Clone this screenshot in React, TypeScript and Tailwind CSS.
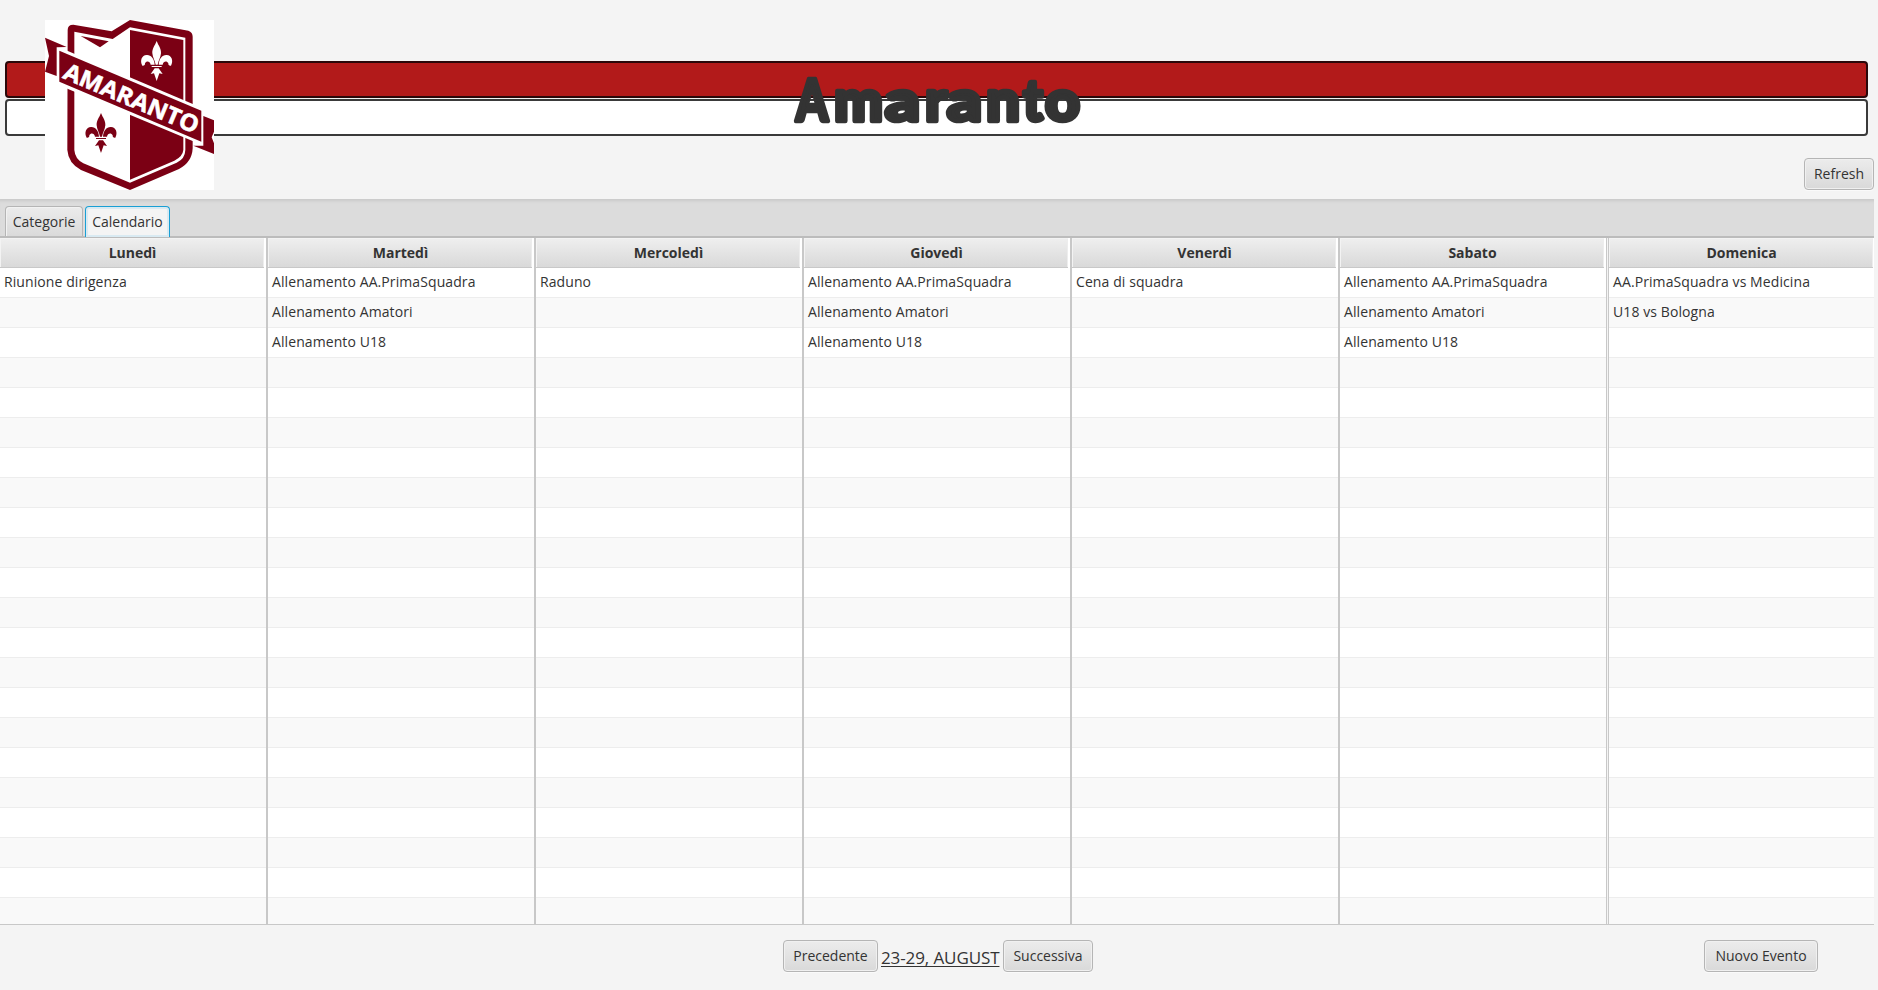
import React from "react";

type Day = { name: string; events: string[] };

const days: Day[] = [
  { name: "Lunedì", events: ["Riunione dirigenza"] },
  { name: "Martedì", events: ["Allenamento AA.PrimaSquadra", "Allenamento Amatori", "Allenamento U18"] },
  { name: "Mercoledì", events: ["Raduno"] },
  { name: "Giovedì", events: ["Allenamento AA.PrimaSquadra", "Allenamento Amatori", "Allenamento U18"] },
  { name: "Venerdì", events: ["Cena di squadra"] },
  { name: "Sabato", events: ["Allenamento AA.PrimaSquadra", "Allenamento Amatori", "Allenamento U18"] },
  { name: "Domenica", events: ["AA.PrimaSquadra vs Medicina", "U18 vs Bologna"] },
];

const ROWS = 22;

// Start and width of each letter in the club title.
const title: [string, number, number][] = [
  ["A", 1, 32],
  ["m", 39, 49],
  ["a", 90, 35],
  ["r", 130, 22],
  ["a", 152, 35],
  ["n", 191, 34],
  ["t", 228, 20],
  ["o", 250, 35],
];

function Lily() {
  return (
    <>
      <path d="M380 93C386 108 394 116 393 130C392 143 385 152 383 164H377C375 152 368 143 367 130C366 116 374 108 380 93Z" />
      <path d="M374 164C373 146 363 134 350 135C335 136 329 152 337 167C342 168 346 165 345 160C350 151 360 154 362 164Z" />
      <path d="M386 164C387 146 397 134 410 135C425 136 431 152 423 167C418 168 414 165 415 160C410 151 400 154 398 164Z" />
      <path d="M365 168H395V171H365Z" />
      <path d="M374 175H386L398 192L388 190L380 213L372 190L362 192Z" />
    </>
  );
}

function Crest() {
  return (
    <svg viewBox="45 30 507 510" preserveAspectRatio="none" className="block h-[170px] w-[169px] bg-white">
      <path
        fill="#7b0014"
        d="M113 60Q113 44 130 44L245 64L300 30L475 62Q488 66 488 80V415Q486 457 447 477L300 540L153 480Q115 460 112 420Z"
      />
      <path fill="#fff" d="M133 65L248 87L300 52L466 83V420Q465 447 440 458L300 518L160 460Q135 447 133 420Z" />
      <path fill="#7b0014" d="M300 60L460 90V420Q458 440 433 452L300 509Z" />
      <path fill="#7b0014" d="M152 78L236 94L210 112Z" />
      <g fill="#fff">
        <Lily />
      </g>
      <g fill="#7b0014" transform="translate(-167 216)">
        <Lily />
      </g>
      <path fill="#fff" d="M80 109L522 296V407L80 223Z" />
      <path fill="#7b0014" d="M88 122L514 302V395L88 215Z" />
      <path fill="#7b0014" d="M45 83L110 111L80 112V198L45 185L57 138Z" />
      <path fill="#7b0014" d="M520 318L552 331V365L545 382L552 400V432L490 407H520Z" />
      <text
        x="0"
        y="0"
        transform="translate(95 203) rotate(22.9)"
        textLength="434"
        lengthAdjust="spacingAndGlyphs"
        fill="#fff"
        stroke="#fff"
        strokeWidth="1.5"
        className="font-['Open_Sans',sans-serif] text-[70px] font-bold"
      >
        AMARANTO
      </text>
    </svg>
  );
}

function Button({ children, className }: { children: React.ReactNode; className: string }) {
  return (
    <button
      className={
        "flex h-8 shrink-0 items-center justify-center whitespace-nowrap rounded-[4px] border border-[#b5b5b5] bg-linear-to-b from-[#ececec] to-[#d9d9d9] pb-px text-[14px] shadow-[0_1px_0_#fafafa,inset_0_0_0_1px_#f0f0f0] " +
        className
      }
    >
      {children}
    </button>
  );
}

function DayColumn({ day, index }: { day: Day; index: number }) {
  const last = index === 6;
  const beforeLast = index === 5;
  return (
    <div
      className={
        "flex h-[687px] shrink-0 flex-col overflow-hidden bg-white " +
        (last
          ? "w-[266px] border-l border-[#c8c8c8]"
          : beforeLast
            ? "mr-px w-[267px] border-r border-[#c8c8c8]"
            : "w-[268px] border-r-2 border-[#c8c8c8]")
      }
    >
      <div className={"flex h-[30px] shrink-0 " + (last ? "pr-px" : "pr-[2px]")}>
        <div className="flex flex-1 items-center justify-center border-b border-[#c8c8c8] bg-linear-to-b from-[#efefef] to-[#d9d9d9] pl-px text-[14px] font-bold shadow-[inset_1px_1px_0_#f3f3f3,inset_-1px_0_0_#ededed]">
          {day.name}
        </div>
      </div>
      {Array.from({ length: ROWS }, (_, r) => (
        <div
          key={r}
          className={
            "flex h-[30px] shrink-0 items-center whitespace-nowrap border-b border-[#ededed] pb-[3px] pl-1 text-[14px] tracking-[0.09px] " +
            (r % 2 ? "bg-[#f9f9f9]" : "bg-white")
          }
        >
          {day.events[r]}
        </div>
      ))}
    </div>
  );
}

export default function App() {
  return (
    <div className="flex h-[990px] w-[1878px] flex-col overflow-hidden bg-[#f4f4f4] font-['Open_Sans','Noto_Sans',sans-serif] text-[#333]">
      <header className="relative h-[199px] shrink-0 pt-[61px] pl-[5px]">
        <div className="h-[37px] w-[1863px] rounded-[4px] border-2 border-[#2a080a] bg-[#b21a1a]" />
        <div className="mt-px h-[37px] w-[1863px] rounded-[4px] border-2 border-[#3a3a3a] bg-white" />
        <div className="absolute top-5 left-[45px]">
          <Crest />
        </div>
        <h1 className="absolute top-[61px] left-[795px] h-[74px] w-[286px]">
          <svg viewBox="0 0 286 74" className="block h-[74px] w-[286px] overflow-visible">
            <text
              y="60"
              fill="#333"
              stroke="#333"
              strokeWidth="4.5"
              strokeLinejoin="round"
              className="font-['Lato',sans-serif] text-[58px] font-black"
            >
              {title.map(([letter, x, width], i) => (
                <tspan key={i} x={x} textLength={width} lengthAdjust="spacingAndGlyphs">
                  {letter}
                </tspan>
              ))}
            </text>
          </svg>
        </h1>
        <div className="mt-[22px] flex justify-end pr-1">
          <Button className="w-[70px]">Refresh</Button>
        </div>
      </header>

      <nav className="flex h-[39px] w-[1874px] shrink-0 items-end gap-[2px] border-b-2 border-[#bcbcbc] bg-[#dcdcdc] pl-[5px] shadow-[inset_0_4px_3px_-2px_#cacaca]">
        <div className="flex h-[30px] w-[78px] items-center justify-center rounded-t-[4px] border border-b-0 border-[#b5b5b5] bg-linear-to-b from-[#ececec] to-[#dadada] text-[14px] shadow-[inset_1px_1px_0_#f2f2f2]">
          Categorie
        </div>
        <div className="-mb-px flex h-[31px] w-[85px] items-center justify-center rounded-t-[4px] border border-b-0 border-[#1a9fd4] bg-[#f4f4f4] pb-px text-[14px] shadow-[inset_0_0_0_2px_#d9eaf2]">
          Calendario
        </div>
      </nav>

      <main className="flex h-[687px] w-[1874px] shrink-0 overflow-hidden border-b border-[#c8c8c8]">
        {days.map((day, i) => (
          <DayColumn key={day.name} day={day} index={i} />
        ))}
      </main>

      <footer className="flex flex-1 items-start pt-[15px] pl-[783px]">
        <Button className="w-[95px]">Precedente</Button>
        <span className="mt-[6px] ml-[3px] w-[119px] whitespace-nowrap text-[17px] leading-6 tracking-[-0.1px] underline decoration-1 underline-offset-2">
          23-29, AUGUST
        </span>
        <Button className="ml-[3px] w-[90px]">Successiva</Button>
        <Button className="ml-[611px] w-[114px]">Nuovo Evento</Button>
      </footer>
    </div>
  );
}
